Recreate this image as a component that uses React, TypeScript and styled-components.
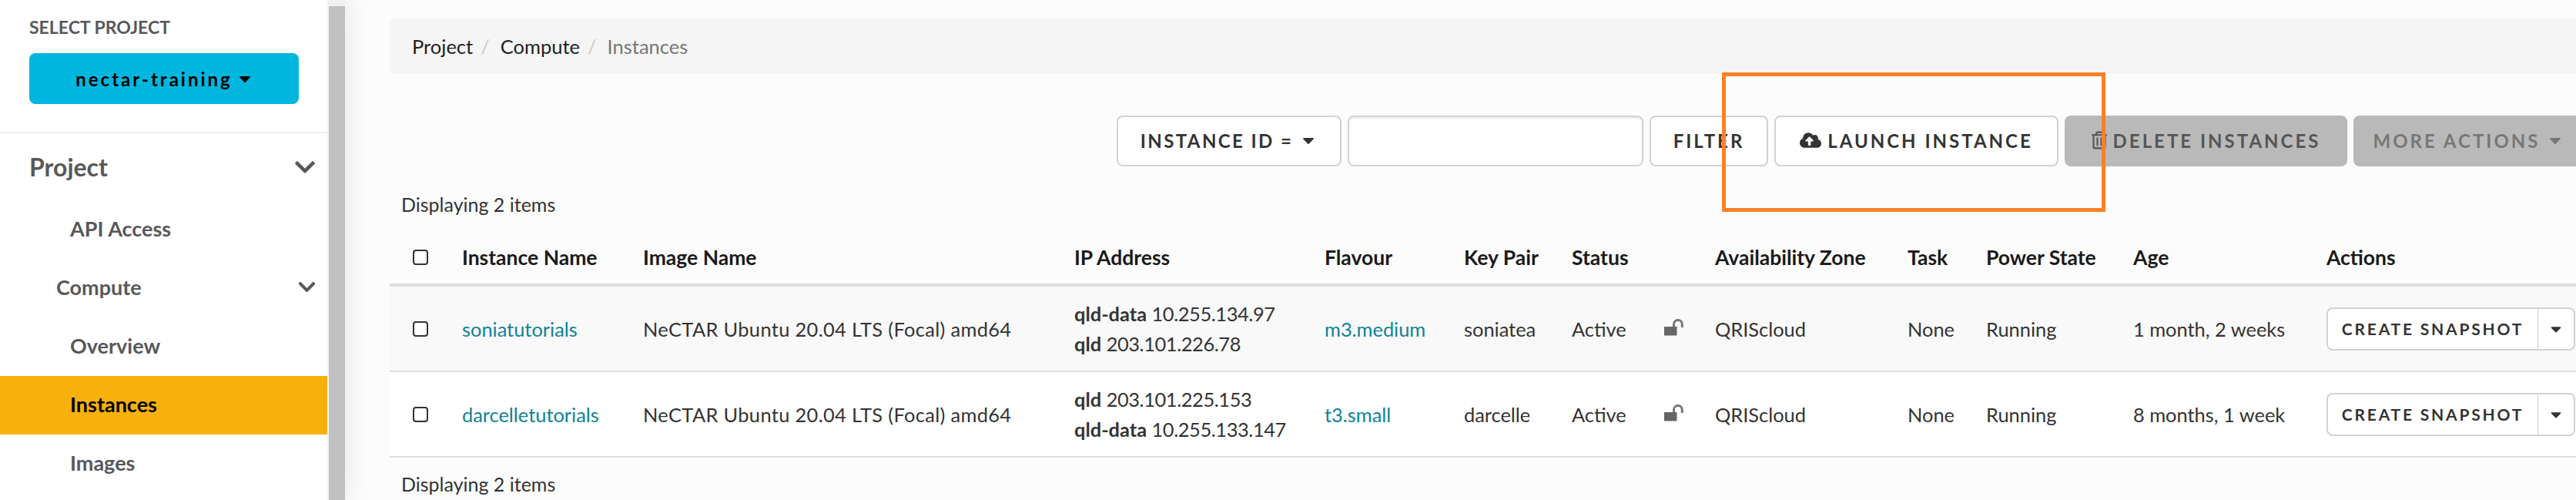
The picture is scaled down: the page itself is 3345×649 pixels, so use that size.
import { createGlobalStyle, styled } from "styled-components";
import { FaCaretDown, FaChevronDown, FaCloudUploadAlt, FaRegTrashAlt } from "react-icons/fa";

const GlobalStyle = createGlobalStyle`
  html, body {
    margin: 0;
    padding: 0;
    width: 3345px;
    height: 649px;
    overflow: hidden;
    background: #fcfcfc;
    font-family: "Lato", "Liberation Sans", sans-serif;
    color: #333;
  }
  * { box-sizing: border-box; }
`;

const instances = [
  {
    name: "soniatutorials",
    ips: [["qld-data", "10.255.134.97"], ["qld", "203.101.226.78"]],
    flavour: "m3.medium",
    keyPair: "soniatea",
    age: "1 month, 2 weeks",
  },
  {
    name: "darcelletutorials",
    ips: [["qld", "203.101.225.153"], ["qld-data", "10.255.133.147"]],
    flavour: "t3.small",
    keyPair: "darcelle",
    age: "8 months, 1 week",
  },
];

const columns = [94, 235, 560, 325, 181, 140, 120, 66, 250, 102, 191, 251, 324];
const headings = ["Instance Name", "Image Name", "IP Address", "Flavour", "Key Pair", "Status", "", "Availability Zone", "Task", "Power State", "Age", "Actions"];

function OpenLock() {
  return <LockSvg viewBox="0 0 25 22">
    <rect x="0" y="10" width="16.5" height="11.5" fill="#666" />
    <path d="M12.5 10V6.8a5.4 5.4 0 0 1 10.8 0V11" fill="none" stroke="#777" strokeWidth="3" />
  </LockSvg>
}

export default function App() {
  return <Page>
    <GlobalStyle />
    <Sidebar>
      <SideNav>
        <ProjectPicker>
          <PickerLabel>SELECT PROJECT</PickerLabel>
          <PickerButton>nectar-training <FaCaretDown /></PickerButton>
        </ProjectPicker>
        <NavGroup>Project <FaChevronDown /></NavGroup>
        <NavItem>API Access</NavItem>
        <NavSubGroup>Compute <FaChevronDown /></NavSubGroup>
        <NavItem>Overview</NavItem>
        <NavItem $active>Instances</NavItem>
        <NavItem>Images</NavItem>
      </SideNav>
      <ScrollTrack><ScrollThumb /></ScrollTrack>
    </Sidebar>
    <Main>
      <Breadcrumb>
        <span>Project</span><Slash>/</Slash>
        <span>Compute</span><Slash>/</Slash>
        <Current>Instances</Current>
      </Breadcrumb>
      <Toolbar>
        <ToolButton $width={292} $spacing={2.4}>INSTANCE ID = <FaCaretDown /></ToolButton>
        <SearchInput />
        <ToolButton $width={154}>FILTER</ToolButton>
        <ToolButton $width={369}><FaCloudUploadAlt /> LAUNCH INSTANCE</ToolButton>
        <ToolButton $width={367} $disabled><FaRegTrashAlt /> DELETE INSTANCES</ToolButton>
        <ToolButton $width={300} $disabled $muted>MORE ACTIONS <FaCaretDown /></ToolButton>
        <Highlight />
      </Toolbar>
      <ItemCount>Displaying 2 items</ItemCount>
      <Table>
        <colgroup>
          {columns.map((w, i) => <col key={i} width={w} />)}
        </colgroup>
        <thead>
          <tr>
            <HeadCell><CheckBox /></HeadCell>
            {headings.map((h, i) => <HeadCell key={i}>{h}</HeadCell>)}
          </tr>
        </thead>
        <tbody>
          {instances.map((row, i) => <Row key={row.name} $odd={i === 0}>
            <Cell><CheckBox /></Cell>
            <Cell><TableLink>{row.name}</TableLink></Cell>
            <Cell><ImageName>NeCTAR Ubuntu 20.04 LTS (Focal) amd64</ImageName></Cell>
            <Cell>
              {row.ips.map(([net, ip]) => <IpLine key={net}><b>{net}</b> <IpValue>{ip}</IpValue></IpLine>)}
            </Cell>
            <Cell><TableLink>{row.flavour}</TableLink></Cell>
            <Cell>{row.keyPair}</Cell>
            <Cell>Active</Cell>
            <Cell><OpenLock /></Cell>
            <Cell>QRIScloud</Cell>
            <Cell>None</Cell>
            <Cell>Running</Cell>
            <Cell>{row.age}</Cell>
            <Cell>
              <SplitButton>
                <SnapshotLabel>CREATE SNAPSHOT</SnapshotLabel>
                <SplitCaret><FaCaretDown /></SplitCaret>
              </SplitButton>
            </Cell>
          </Row>)}
        </tbody>
      </Table>
      <ItemCount $bottom>Displaying 2 items</ItemCount>
    </Main>
  </Page>
}

const Page = styled.div`
  display: flex;
  width: 3345px;
  height: 649px;
  overflow: hidden;
`

const Sidebar = styled.aside`
  flex: 0 0 449px;
  display: flex;
  background: #fff;
  box-shadow: 0 0 36px rgba(0, 0, 0, .1);
  position: relative;
  z-index: 1;
`

const SideNav = styled.nav`
  width: 425px;
  color: #58585b;
`

const ProjectPicker = styled.div`
  height: 173px;
  padding: 24px 37px 0 38px;
  border-bottom: 2px solid #eee;
`

const PickerLabel = styled.div`
  font-size: 23px;
  line-height: 22px;
  font-weight: 700;
  margin-bottom: 23px;
`

const PickerButton = styled.div`
  height: 66px;
  border-radius: 8px;
  background: #00b6de;
  color: #000;
  font-size: 24px;
  font-weight: 700;
  letter-spacing: 3px;
  display: flex;
  align-items: center;
  justify-content: center;
  gap: 6px;
  svg { width: 20px; height: 24px; }
`

const NavGroup = styled.div`
  height: 87px;
  padding: 0 14px 0 38px;
  display: flex;
  align-items: center;
  justify-content: space-between;
  font-size: 32px;
  font-weight: 700;
  svg { width: 30px; height: 30px; }
`

const NavItem = styled.div<{ $active?: boolean }>`
  height: 76px;
  padding: 0 0 3px 91px;
  display: flex;
  align-items: center;
  font-size: 27px;
  font-weight: 700;
  background: ${p => p.$active ? "#f8b10c" : "transparent"};
  color: ${p => p.$active ? "#000" : "inherit"};
`

const NavSubGroup = styled(NavItem)`
  padding: 0 14px 3px 73px;
  justify-content: space-between;
  svg { width: 25px; height: 25px; }
`

const ScrollTrack = styled.div`
  width: 24px;
  padding: 8px 1px 0 2px;
  background: #f1f1f1;
`

const ScrollThumb = styled.div`
  height: 100%;
  background: #c1c1c1;
`

const Main = styled.main`
  flex: 1;
  min-width: 0;
  padding: 24px 0 0 57px;
  background: #fcfcfc;
`

const Breadcrumb = styled.div`
  height: 72px;
  padding-left: 29px;
  display: flex;
  align-items: center;
  background: #f5f5f5;
  border-radius: 8px 0 0 8px;
  font-size: 25.5px;
  color: #1f1f1f;
`

const Slash = styled.span`
  color: #ccc;
  margin: 0 14px 0 10px;
`

const Current = styled.span`
  color: #777;
`

const Toolbar = styled.div`
  position: relative;
  height: 66px;
  margin: 54px 0 0 944px;
  display: flex;
  gap: 8px;
`

const ToolButton = styled.div<{ $width: number; $spacing?: number; $disabled?: boolean; $muted?: boolean }>`
  flex: 0 0 ${p => p.$width}px;
  display: flex;
  align-items: center;
  justify-content: center;
  gap: 8px;
  padding-bottom: 2px;
  border-radius: 8px;
  border: 2px solid ${p => p.$disabled ? "#b9b9b9" : "#d2d2d2"};
  background: ${p => p.$disabled ? "#b9b9b9" : "#fff"};
  color: ${p => p.$muted ? "#777" : p.$disabled ? "#555" : "#333"};
  font-size: 24px;
  font-weight: 700;
  letter-spacing: ${p => p.$spacing ?? 3}px;
  white-space: nowrap;
  svg { flex: none; }
  svg[viewBox="0 0 640 512"] { width: 28px; height: 24px; }
  svg[viewBox="0 0 448 512"] { width: 20px; height: 24px; }
`

const SearchInput = styled.div`
  flex: 0 0 384px;
  background: #fff;
  border: 2px solid #d2d2d2;
  border-radius: 8px;
  box-shadow: inset 0 2px 2px rgba(0, 0, 0, .075);
`

const Highlight = styled.div`
  position: absolute;
  left: 786px;
  top: -56px;
  width: 498px;
  height: 181px;
  border: 5px solid #ff8026;
  pointer-events: none;
`

const ItemCount = styled.div<{ $bottom?: boolean }>`
  height: 30px;
  line-height: 30px;
  margin: ${p => p.$bottom ? "19px" : "34px"} 0 0 15px;
  font-size: 25px;
`

const Table = styled.table`
  width: 2839px;
  margin-top: 20px;
  table-layout: fixed;
  border-collapse: separate;
  border-spacing: 0;
`

const HeadCell = styled.th`
  height: 72px;
  padding: 0;
  text-align: left;
  font-size: 26.5px;
  font-weight: 700;
  color: #1a1a1a;
  border-bottom: 4px solid #ddd;
  &:first-child { padding-left: 30px; }
`

const Row = styled.tr<{ $odd?: boolean }>`
  background: ${p => p.$odd ? "#f9f9f9" : "#fff"};
`

const Cell = styled.td`
  height: 111px;
  padding: 0;
  font-size: 25.4px;
  color: #333;
  border-bottom: 2px solid #ddd;
  &:first-child { padding-left: 30px; }
`

const CheckBox = styled.div`
  width: 20px;
  height: 20px;
  border: 2px solid #333;
  border-radius: 4px;
  background: #fff;
`

const TableLink = styled.span`
  color: #0f8397;
`

const ImageName = styled.span`
  letter-spacing: .35px;
`

const IpLine = styled.div`
  line-height: 39px;
  b { font-weight: 700; }
`

const IpValue = styled.span`
  letter-spacing: -.4px;
`

const LockSvg = styled.svg`
  display: block;
  width: 25px;
  height: 22px;
  margin-bottom: 4px;
`

const SplitButton = styled.div`
  width: 323px;
  height: 56px;
  display: flex;
  background: #fff;
  border: 2px solid #d2d2d2;
  border-radius: 8px;
`

const SnapshotLabel = styled.div`
  width: 273px;
  display: flex;
  align-items: center;
  justify-content: center;
  border-right: 1px solid #d2d2d2;
  font-size: 21px;
  font-weight: 700;
  letter-spacing: 2.8px;
  color: #333;
`

const SplitCaret = styled.div`
  flex: 1;
  display: flex;
  align-items: center;
  justify-content: center;
  font-size: 22px;
`
